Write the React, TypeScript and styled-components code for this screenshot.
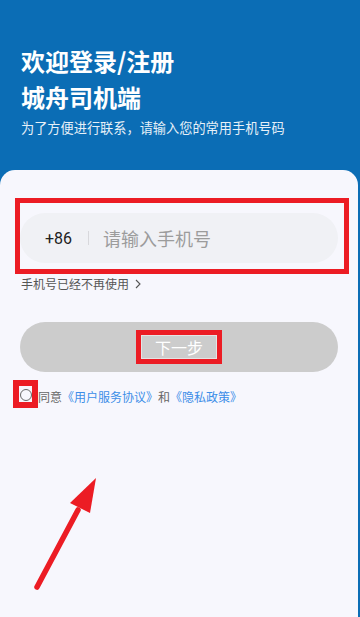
import styled, { createGlobalStyle } from 'styled-components'

const GlobalStyle = createGlobalStyle`
  html, body {
    margin: 0;
    padding: 0;
    background: #0b6db5;
  }
  body {
    font-family: "Noto Sans CJK SC", "Noto Sans", sans-serif;
  }
  * {
    box-sizing: border-box;
  }
`

const Page = styled.div`
  position: relative;
  width: 360px;
  height: 617px;
  background: #0b6db5;
  display: flex;
  flex-direction: column;
  overflow: hidden;
`
const Header = styled.header`
  padding: 43px 21px 32px;
  color: #fff;
`
const Title = styled.h1`
  margin: 0;
  font-size: 24px;
  line-height: 36px;
  font-weight: 700;
`
const Subtitle = styled.p`
  margin: 3px 0 0;
  font-size: 13.2px;
  line-height: 20px;
  color: #e6f0f8;
`
const Card = styled.main`
  flex: 1;
  margin-right: 2px;
  background: #f7f7fd;
  border-radius: 15px 15px 0 0;
  padding: 28px 0 0;
  display: flex;
  flex-direction: column;
`
const Highlight = styled.div`
  margin: 0 9px 0 15px;
  border: 5px solid #ec1c24;
  padding: 10px 6px 6px 0;
`
const PhoneField = styled.label`
  display: flex;
  align-items: center;
  height: 50px;
  border-radius: 25px;
  background: #f0f1f5;
  padding-left: 25px;
`
const Prefix = styled.span`
  font-size: 16px;
  color: #222;
  font-family: "Roboto", "Noto Sans CJK SC", sans-serif;
`
const Divider = styled.span`
  width: 1px;
  height: 14px;
  background: #d8d8dc;
  margin: 0 14px 0 16px;
`
const PhoneInput = styled.input`
  flex: 1;
  min-width: 0;
  border: none;
  outline: none;
  background: transparent;
  font-family: inherit;
  font-size: 18px;
  color: #222;
  padding: 0;
  &::placeholder {
    color: #9c9c9c;
  }
`
const Hint = styled.a`
  display: flex;
  align-items: center;
  gap: 6px;
  margin: 1px 0 0 21px;
  font-size: 12px;
  line-height: 18px;
  color: #555;
  text-decoration: none;
  svg {
    display: block;
  }
`
const NextButton = styled.button`
  margin: 29px 20px 0;
  height: 50px;
  border: none;
  border-radius: 25px;
  background: #cccccc;
  display: flex;
  align-items: center;
  justify-content: center;
  padding: 0;
  font-family: inherit;
`
const ButtonLabel = styled.span`
  display: inline-block;
  border: 5px solid #ec1c24;
  box-shadow: inset 0 0 0 1px #e4e4e4;
  padding: 0 14px;
  font-size: 16px;
  line-height: 24px;
  color: #fff;
`
const AgreeRow = styled.div`
  display: flex;
  align-items: center;
  margin: 8px 0 0 13px;
`
const RadioMark = styled.span`
  display: flex;
  justify-content: center;
  padding-top: 3px;
  width: 25px;
  height: 28px;
  border: 6px solid #ec1c24;
  background: #f7f7fd;
  &::after {
    content: '';
    width: 12px;
    height: 12px;
    border-radius: 50%;
    border: 1.3px solid #666;
    box-sizing: border-box;
  }
`
const AgreeText = styled.span`
  padding-top: 6px;
  font-size: 12px;
  line-height: 18px;
  color: #666;
`
const Link = styled.a`
  color: #3c8ee8;
  text-decoration: none;
`
const Arrow = styled.svg`
  position: absolute;
  left: 30px;
  top: 472px;
`

export default function App() {
  return (
    <Page>
      <GlobalStyle />
      <Header>
        <Title>欢迎登录/注册</Title>
        <Title>城舟司机端</Title>
        <Subtitle>为了方便进行联系，请输入您的常用手机号码</Subtitle>
      </Header>
      <Card>
        <Highlight>
          <PhoneField>
            <Prefix>+86</Prefix>
            <Divider />
            <PhoneInput type="tel" placeholder="请输入手机号" />
          </PhoneField>
        </Highlight>
        <Hint href="#">
          手机号已经不再使用
          <svg width="6" height="10" viewBox="0 0 6 10">
            <path d="M1 1l4 4-4 4" fill="none" stroke="#555" strokeWidth="1.1" />
          </svg>
        </Hint>
        <NextButton>
          <ButtonLabel>下一步</ButtonLabel>
        </NextButton>
        <AgreeRow>
          <RadioMark />
          <AgreeText>
            同意<Link href="#">《用户服务协议》</Link>和<Link href="#">《隐私政策》</Link>
          </AgreeText>
        </AgreeRow>
      </Card>
      <Arrow width="80" height="125" viewBox="0 0 80 125">
        <path d="M7 115L48 38" stroke="#ec1c24" strokeWidth="5.5" strokeLinecap="round" fill="none" />
        <path d="M66 6L40 31L60 41Z" fill="#ec1c24" />
      </Arrow>
    </Page>
  )
}
